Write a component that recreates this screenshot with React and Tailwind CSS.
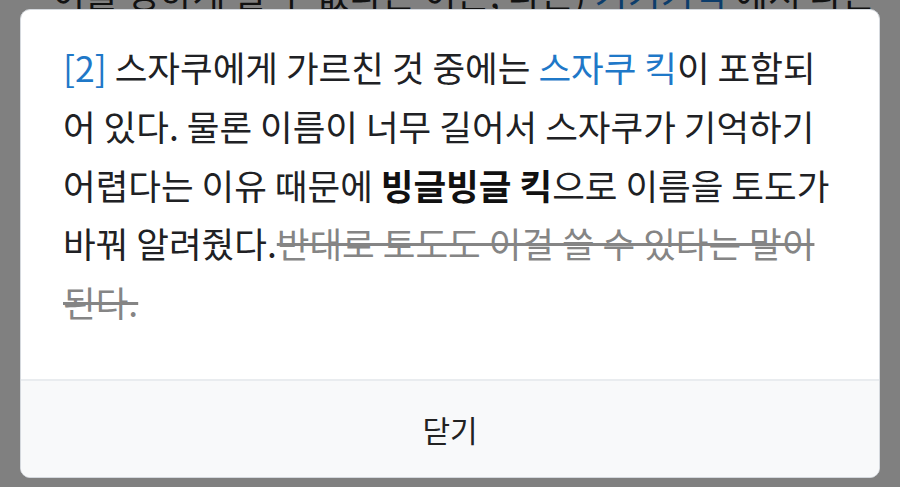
export default function App() {
  return (
    <div
      className="relative h-[487px] w-[900px] overflow-hidden bg-[#808080]"
      style={{ fontFamily: '"Noto Sans CJK KR", "Noto Sans", sans-serif' }}
    >
      {/* page text behind the dimmed backdrop */}
      <p className="absolute left-[52px] top-[-28px] whitespace-nowrap text-[36px] leading-[40px] text-[#121212]">
        이를 정하게 할 수 없다는 이론, 다른) <span className="text-[#0d3d6b]">키키키킥</span> 에서 나온
      </p>

      {/* dialog */}
      <div className="relative mx-[20px] mt-[9px] flex h-[469px] flex-col overflow-hidden rounded-[10px] border border-[#d5d9de] bg-white">
        <div className="flex-1 pl-[42px] pr-[42px] pt-[28px]">
          <p className="text-[35.5px] leading-[58.75px] text-[#202124]">
            <span className="text-[#1f78c8]">[2]</span> 스자쿠에게 가르친 것 중에는{' '}
            <span className="text-[#1f78c8]">스자쿠 킥</span>이 포함되어 있다. 물론 이름이 너무 길어서 스자쿠가 기억하기
            어렵다는 이유 때문에 <b className="font-bold text-[#111]">빙글빙글 킥</b>으로 이름을 토도가 바꿔 알려줬다.
            <span className="text-[#858585] line-through decoration-[#858585]">반대로 토도도 이걸 쓸 수 있다는 말이 된다.</span>
          </p>
        </div>
        <div className="flex h-[98px] items-center justify-center border-t-2 border-[#e9ecef] bg-[#f8f9fa]">
          <span className="text-[30px] text-[#222]">닫기</span>
        </div>
      </div>
    </div>
  );
}
